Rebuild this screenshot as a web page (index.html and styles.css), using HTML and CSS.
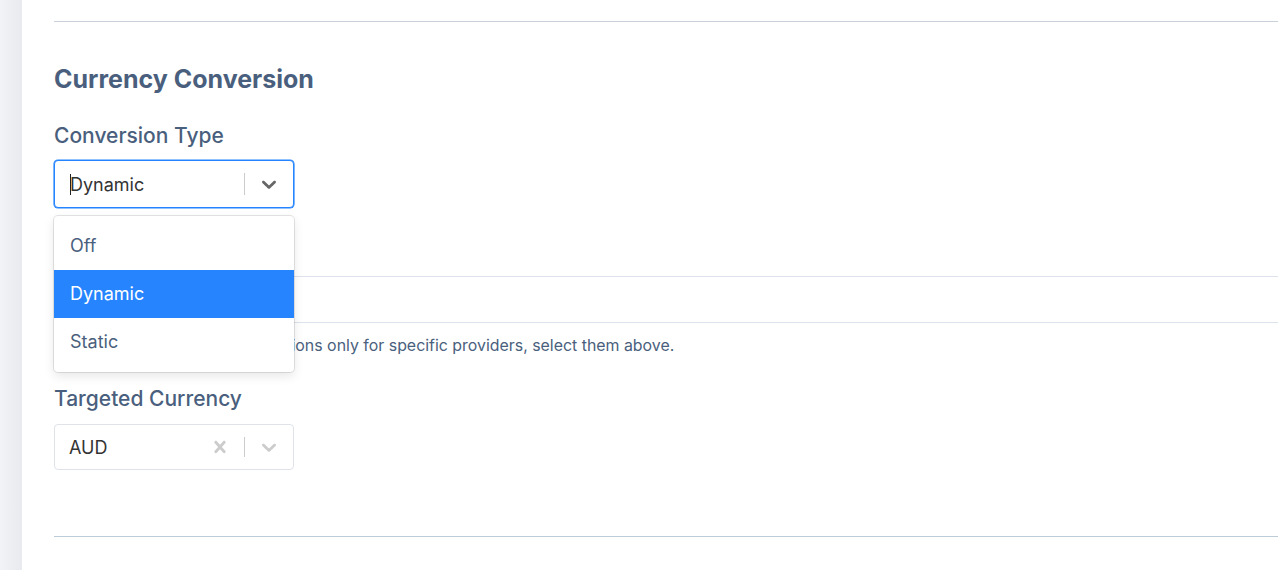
FILE: index.html
```html
<!DOCTYPE html>
<html>
<head>
<meta charset="utf-8">
<link rel="stylesheet" href="styles.css">
</head>
<body>
<div class="app">
  <aside class="sidebar"></aside>
  <main class="main">
    <section class="section">
      <h2 class="title">Currency Conversion</h2>
      <label class="label">Conversion Type</label>
      <div class="select-wrap">
        <div class="select focused">
          <div class="value"><span class="caret"></span>Dynamic</div>
          <div class="indicators">
            <span class="sep"></span>
            <span class="ind">
              <svg viewBox="0 0 20 20" width="24" height="24"><path fill="#666" d="M4.516 7.548c0.436-0.446 1.043-0.481 1.576 0l3.908 3.747 3.908-3.747c0.533-0.481 1.141-0.446 1.574 0 0.436 0.445 0.408 1.197 0 1.615-0.406 0.418-4.695 4.502-4.695 4.502-0.217 0.223-0.502 0.335-0.787 0.335s-0.57-0.112-0.789-0.335c0 0-4.287-4.084-4.695-4.502s-0.436-1.17 0-1.615z"/></svg>
            </span>
          </div>
        </div>
        <div class="menu">
          <div class="option">Off</div>
          <div class="option selected">Dynamic</div>
          <div class="option">Static</div>
        </div>
      </div>
      <div class="providers"></div>
      <p class="help">To enable the currency conversions only for specific providers, select them above.</p>
      <label class="label label-2">Targeted Currency</label>
      <div class="select">
        <div class="value">AUD</div>
        <div class="indicators">
          <span class="ind">
            <svg viewBox="0 0 20 20" width="24" height="24"><path fill="#ccc" d="M14.348 14.849c-0.469 0.469-1.229 0.469-1.697 0l-2.651-3.030-2.651 3.029c-0.469 0.469-1.229 0.469-1.697 0-0.469-0.469-0.469-1.229 0-1.697l2.758-3.15-2.759-3.152c-0.469-0.469-0.469-1.228 0-1.697s1.228-0.469 1.697 0l2.652 3.031 2.651-3.031c0.469-0.469 1.228-0.469 1.697 0s0.469 1.229 0 1.697l-2.758 3.152 2.758 3.150c0.469 0.469 0.469 1.229 0 1.698z"/></svg>
          </span>
          <span class="sep"></span>
          <span class="ind">
            <svg viewBox="0 0 20 20" width="24" height="24"><path fill="#ccc" d="M4.516 7.548c0.436-0.446 1.043-0.481 1.576 0l3.908 3.747 3.908-3.747c0.533-0.481 1.141-0.446 1.574 0 0.436 0.445 0.408 1.197 0 1.615-0.406 0.418-4.695 4.502-4.695 4.502-0.217 0.223-0.502 0.335-0.787 0.335s-0.57-0.112-0.789-0.335c0 0-4.287-4.084-4.695-4.502s-0.436-1.17 0-1.615z"/></svg>
          </span>
        </div>
      </div>
    </section>
    <div class="bottom-rule"></div>
  </main>
</div>
</body>
</html>
```

FILE: styles.css
```css
* { box-sizing: border-box; }
html, body { margin: 0; padding: 0; }
body {
  font-family: Inter, "Noto Sans", "Liberation Sans", sans-serif;
  background: #fff;
  width: 1278px;
  height: 570px;
  overflow: hidden;
}
.app { display: flex; height: 570px; }
.sidebar {
  width: 22px;
  flex: none;
  background: linear-gradient(to right, #f2f3f6, #e9eaef);
}
.main {
  flex: 1;
  padding: 21px 0 0 32px;
}
.section {
  border-top: 1px solid #c8d0d9;
  padding-top: 42px;
}
.title {
  margin: 0;
  font-size: 25px;
  line-height: 30px;
  font-weight: 700;
  color: #4a5f7d;
}
.label {
  display: block;
  margin-top: 30px;
  font-size: 21px;
  line-height: 24px;
  font-weight: 500;
  color: #4a5f7d;
}
.label-2 { margin-top: 31px; }
.select-wrap { position: relative; width: 240px; margin-top: 12px; }
.select {
  width: 240px;
  height: 46px;
  border: 1px solid #dfe3e8;
  border-radius: 4px;
  display: flex;
  align-items: center;
  background: #fff;
}
.label-2 + .select { margin-top: 13px; }
.select.focused {
  height: 48px;
  border-color: #2684ff;
  box-shadow: 0 0 0 0.6px #2684ff;
}
.value {
  flex: 1;
  padding-left: 14px;
  font-size: 18px;
  color: #333;
  display: flex;
  align-items: center;
}
.caret {
  display: inline-block;
  width: 1px;
  height: 21px;
  background: #222;
  margin-left: 1px;
  margin-right: -1px;
}
.indicators { display: flex; align-items: stretch; align-self: stretch; }
.sep { width: 1px; background: #ccc; margin: 12px 0; }
.ind { display: flex; align-items: center; padding: 0 12px; }
.ind svg { display: block; }
.menu {
  position: absolute;
  top: calc(100% + 8px);
  left: 0;
  width: 240px;
  background: #fff;
  border-radius: 4px;
  box-shadow: 0 0 0 1px rgba(0,0,0,0.1), 0 4px 11px rgba(0,0,0,0.1);
  padding: 6px 0 6px;
  z-index: 2;
}
.option {
  height: 48px;
  line-height: 48px;
  padding-left: 16px;
  font-size: 18px;
  color: #4a5f7d;
}
.option.selected { background: #2684ff; color: #fff; }
.providers {
  margin-top: 68px;
  height: 47px;
  border-top: 1px solid #dde3ec;
  border-bottom: 1px solid #dde3ec;
}
.help {
  margin: 13px 0 0;
  font-size: 15.9px;
  line-height: 20px;
  color: #4a5f7d;
}
.bottom-rule {
  margin-top: 66px;
  border-top: 1px solid #bccdd9;
}
```
